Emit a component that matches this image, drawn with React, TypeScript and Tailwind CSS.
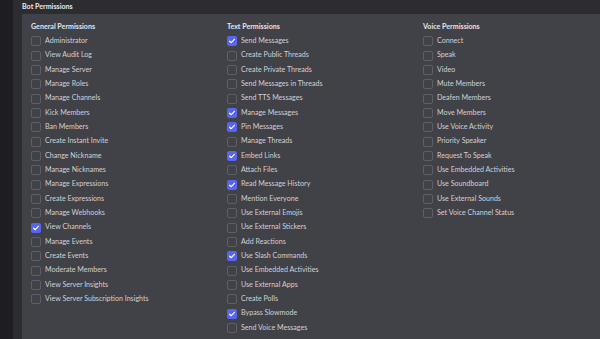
import React from "react";

type P = { name: string; on?: boolean };

const general: P[] = [
  { name: "Administrator" },
  { name: "View Audit Log" },
  { name: "Manage Server" },
  { name: "Manage Roles" },
  { name: "Manage Channels" },
  { name: "Kick Members" },
  { name: "Ban Members" },
  { name: "Create Instant Invite" },
  { name: "Change Nickname" },
  { name: "Manage Nicknames" },
  { name: "Manage Expressions" },
  { name: "Create Expressions" },
  { name: "Manage Webhooks" },
  { name: "View Channels", on: true },
  { name: "Manage Events" },
  { name: "Create Events" },
  { name: "Moderate Members" },
  { name: "View Server Insights" },
  { name: "View Server Subscription Insights" },
];

const text: P[] = [
  { name: "Send Messages", on: true },
  { name: "Create Public Threads" },
  { name: "Create Private Threads" },
  { name: "Send Messages in Threads" },
  { name: "Send TTS Messages" },
  { name: "Manage Messages", on: true },
  { name: "Pin Messages", on: true },
  { name: "Manage Threads" },
  { name: "Embed Links", on: true },
  { name: "Attach Files" },
  { name: "Read Message History", on: true },
  { name: "Mention Everyone" },
  { name: "Use External Emojis" },
  { name: "Use External Stickers" },
  { name: "Add Reactions" },
  { name: "Use Slash Commands", on: true },
  { name: "Use Embedded Activities" },
  { name: "Use External Apps" },
  { name: "Create Polls" },
  { name: "Bypass Slowmode", on: true },
  { name: "Send Voice Messages" },
];

const voice: P[] = [
  { name: "Connect" },
  { name: "Speak" },
  { name: "Video" },
  { name: "Mute Members" },
  { name: "Deafen Members" },
  { name: "Move Members" },
  { name: "Use Voice Activity" },
  { name: "Priority Speaker" },
  { name: "Request To Speak" },
  { name: "Use Embedded Activities" },
  { name: "Use Soundboard" },
  { name: "Use External Sounds" },
  { name: "Set Voice Channel Status" },
];

function Box({ on }: { on?: boolean }) {
  if (on) {
    return (
      <div className="w-[10px] h-[10px] rounded-[2px] bg-[#5865f2] flex items-center justify-center shrink-0">
        <svg width="8" height="8" viewBox="0 0 8 8" fill="none">
          <path d="M1.6 4.2 L3.2 5.7 L6.4 2.3" stroke="#ffffff" strokeWidth="1.2" strokeLinecap="round" strokeLinejoin="round" />
        </svg>
      </div>
    );
  }
  return <div className="w-[10px] h-[10px] rounded-[2px] border border-[#5e5e66] shrink-0" />;
}

function Column({ title, items }: { title: string; items: P[] }) {
  return (
    <div className="w-[196px] flex flex-col">
      <div className="h-[13px] flex items-center text-[7.1px] font-bold text-[#e4e4e8]">{title}</div>
      {items.map((p) => (
        <div key={p.name} className="h-[14.35px] flex items-center gap-[4px]">
          <Box on={p.on} />
          <span className="text-[7.1px] text-[#d0d1d5] whitespace-nowrap">{p.name}</span>
        </div>
      ))}
    </div>
  );
}

export default function App() {
  return (
    <div
      className="w-[600px] h-[339px] overflow-hidden flex bg-[#1e1e22]"
      style={{ fontFamily: 'Lato, "Noto Sans", sans-serif' }}
    >
      <div className="w-[13px] shrink-0" />
      <div className="flex-1 flex flex-col bg-[#2c2c31]">
        <div className="h-[14px] shrink-0 flex items-center pl-[9px] text-[7.1px] font-bold text-[#e8e8ec]">
          Bot Permissions
        </div>
        <div className="flex-1 ml-[9px] bg-[#414148] pt-[7px] pl-[9px] flex">
          <Column title="General Permissions" items={general} />
          <Column title="Text Permissions" items={text} />
          <Column title="Voice Permissions" items={voice} />
        </div>
      </div>
    </div>
  );
}
